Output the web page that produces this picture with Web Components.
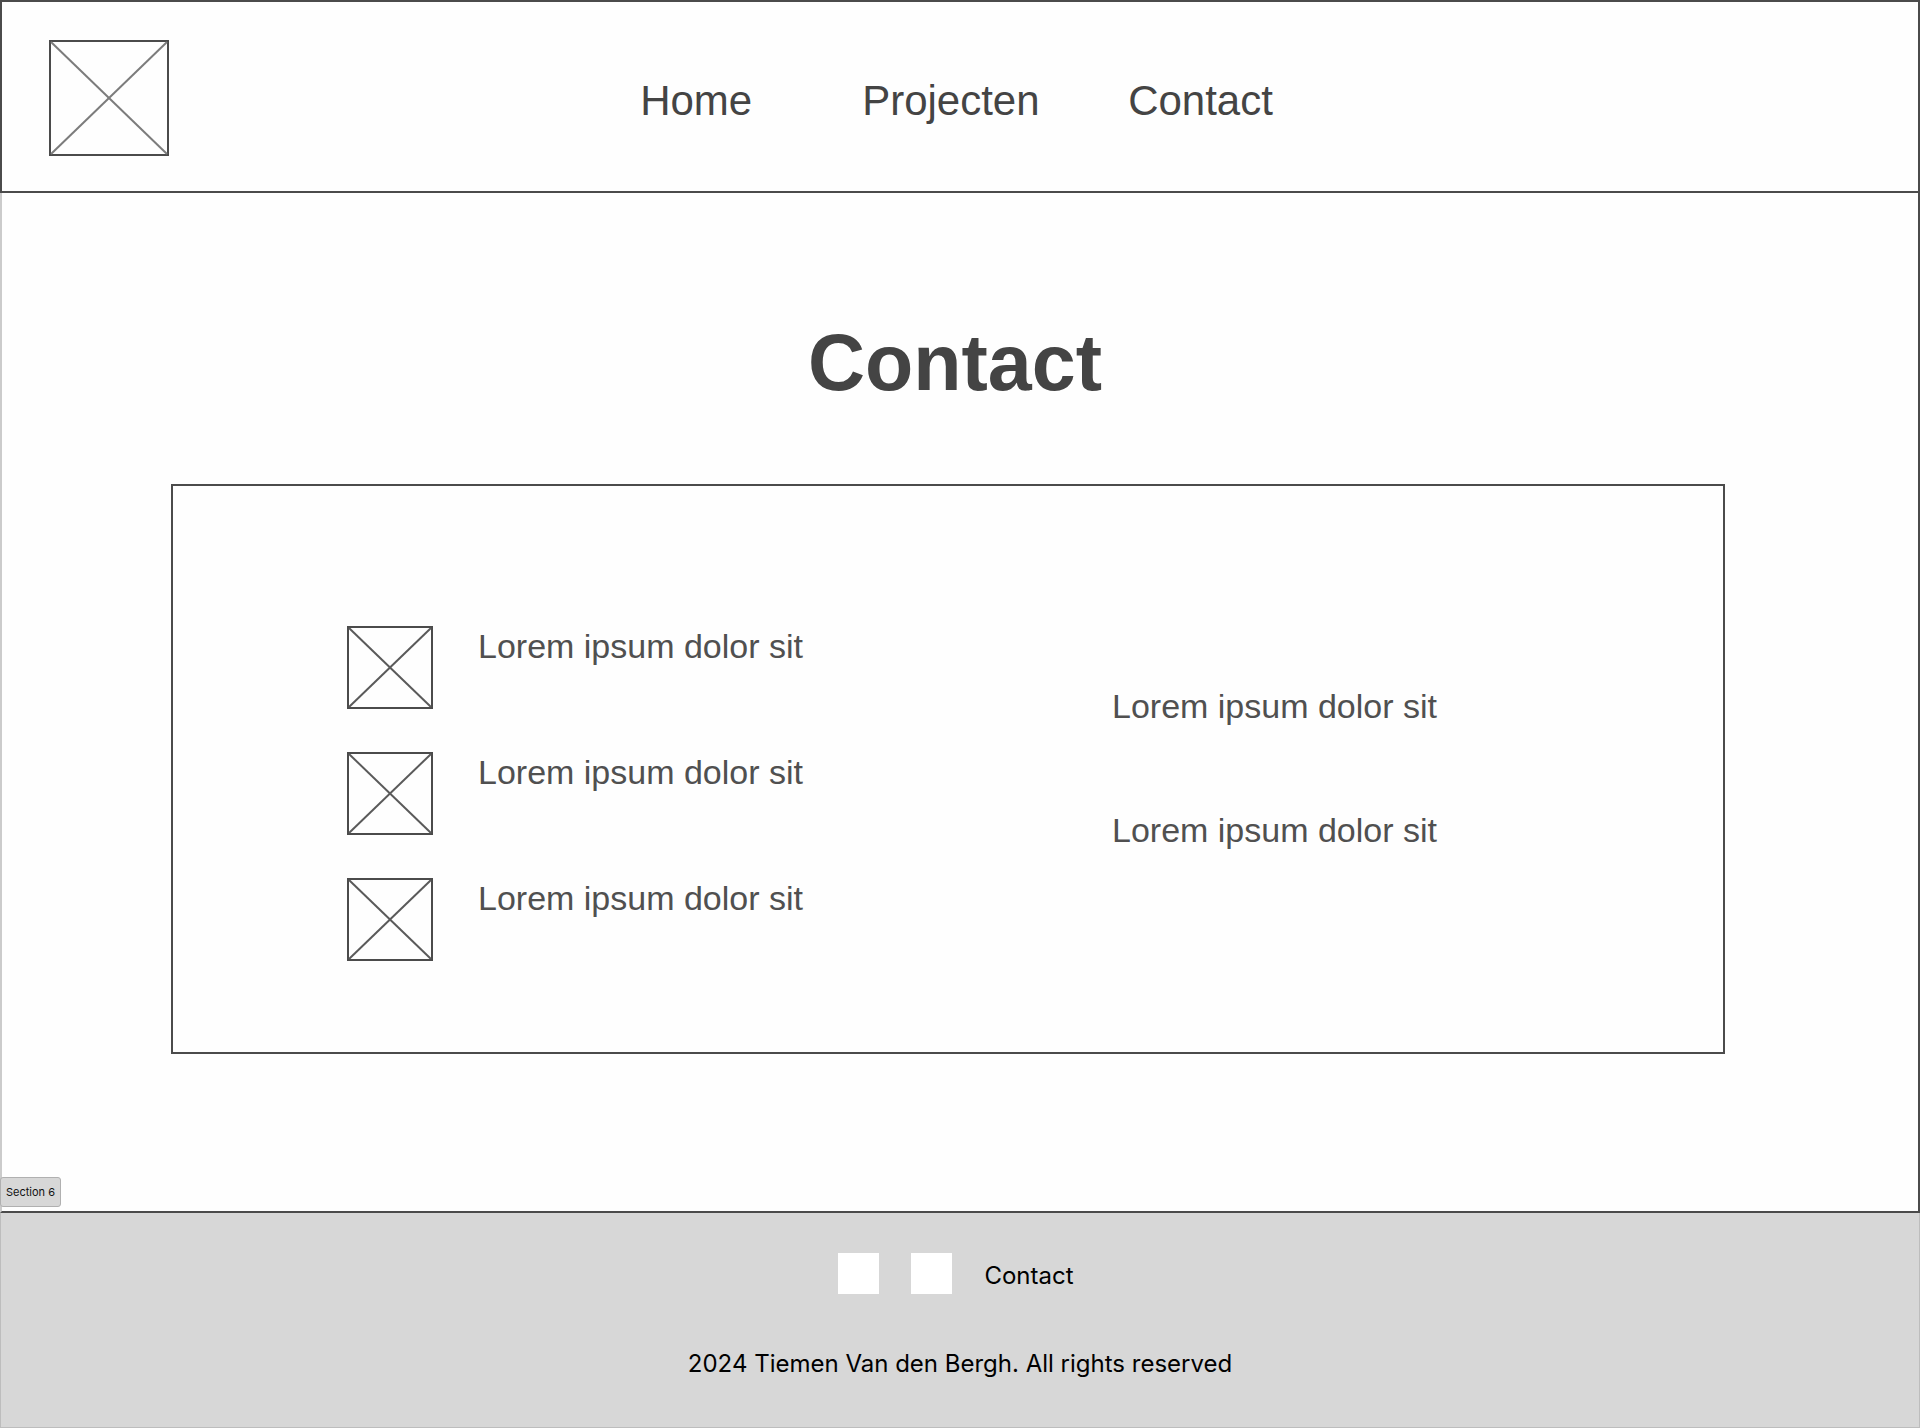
<!DOCTYPE html>
<html lang="nl">
<head>
<meta charset="utf-8">
<title>Contact</title>
<style>
  html, body { margin: 0; min-height: 100%; }
  body { background: #fefefe; }
</style>
</head>
<body>
<contact-page></contact-page>
<script>
const define = (name, html) => {
  const template = document.createElement('template');
  template.innerHTML = html;
  customElements.define(name, class extends HTMLElement {
    constructor() {
      super();
      this.attachShadow({ mode: 'open' }).append(template.content.cloneNode(true));
    }
  });
};

define('image-placeholder', `
  <style>
    :host { display: block; flex: none; box-sizing: border-box; width: 86px; height: 83px; border: 2px solid #4b4b4b; }
    svg { display: block; width: 100%; height: 100%; overflow: visible; }
    line { stroke: var(--cross, #5a5a5a); stroke-width: 2px; }
  </style>
  <svg aria-hidden="true"><line x1="0" y1="0" x2="100%" y2="100%"/><line x1="100%" y1="0" x2="0" y2="100%"/></svg>`);

define('site-header', `
  <style>
    :host { display: grid; grid-template-columns: 1fr auto 1fr; align-items: center; box-sizing: border-box;
      height: 193px; padding: 2px 54px 0 47px; border: 2px solid #4b4b4b; }
    image-placeholder { width: 120px; height: 116px; --cross: #7c7c7c; }
    ul { display: grid; grid-template-columns: 222px 266px auto; margin: 0; padding: 6px 0 0; list-style: none; }
    a { color: #444; text-decoration: none; font: 42px/48px "Liberation Sans", Arial, sans-serif; }
  </style>
  <image-placeholder></image-placeholder>
  <nav><ul>
    <li><a href="#home">Home</a></li>
    <li><a href="#projecten">Projecten</a></li>
    <li><a href="#contact">Contact</a></li>
  </ul></nav>`);

define('contact-row', `
  <style>
    :host { display: flex; gap: 45px; color: #505050; font: 34px/40px "Liberation Sans", Arial, sans-serif; }
  </style>
  <slot name="icon"></slot><span><slot></slot></span>`);

define('contact-card', `
  <style>
    :host { display: grid; grid-template-columns: 765px 1fr; box-sizing: border-box;
      padding: 140px 173px 91px 174px; border: 2px solid #4b4b4b; }
    .channels { display: grid; gap: 43px; }
    .details { display: grid; align-content: start; gap: 84px; padding-top: 60px; }
  </style>
  <div class="channels">
    <contact-row><image-placeholder slot="icon"></image-placeholder>Lorem ipsum dolor sit</contact-row>
    <contact-row><image-placeholder slot="icon"></image-placeholder>Lorem ipsum dolor sit</contact-row>
    <contact-row><image-placeholder slot="icon"></image-placeholder>Lorem ipsum dolor sit</contact-row>
  </div>
  <div class="details">
    <contact-row>Lorem ipsum dolor sit</contact-row>
    <contact-row>Lorem ipsum dolor sit</contact-row>
  </div>`);

define('section-badge', `
  <style>
    :host { display: block; box-sizing: border-box; padding: 0 5px; border: 1px solid #b0b0b0; border-radius: 3px;
      background: #d7d7d7; color: #111; font: 11px/28px Inter, sans-serif; }
  </style>
  <slot></slot>`);

define('site-footer', `
  <style>
    :host { display: flex; flex-direction: column; align-items: center; gap: 54px; box-sizing: border-box;
      padding: 40px 0 47px; border: 1px solid #bdbdbd; border-top: 0; background: #d7d7d7; color: #000;
      font: 24px/32px Inter, sans-serif; }
    nav { display: flex; gap: 32px; padding-right: 8px; }
    .social { width: 41px; height: 41px; background: #fff; }
    .link { padding-top: 7px; color: inherit; text-decoration: none; }
    p { margin: 0; }
  </style>
  <nav>
    <a class="social" href="#social-1"></a>
    <a class="social" href="#social-2"></a>
    <a class="link" href="#contact">Contact</a>
  </nav>
  <p>2024 Tiemen Van den Bergh. All rights reserved</p>`);

define('contact-page', `
  <style>
    :host { display: flex; flex-direction: column; min-height: 100vh; }
    main { position: relative; box-sizing: border-box; padding: 124px 193px 157px 169px;
      border: solid #4b4b4b; border-width: 0 2px 2px; border-left-color: #cbcbcb; }
    h1 { margin: 0 0 75px; padding-left: 14px; color: #444; text-align: center; font: bold 79px/92px "Liberation Sans", Arial, sans-serif; }
    section-badge { position: absolute; left: -2px; bottom: 4px; }
    site-footer { flex: 1; }
  </style>
  <site-header></site-header>
  <main>
    <h1>Contact</h1>
    <contact-card></contact-card>
    <section-badge>Section 6</section-badge>
  </main>
  <site-footer></site-footer>`);
</script>
</body>
</html>
